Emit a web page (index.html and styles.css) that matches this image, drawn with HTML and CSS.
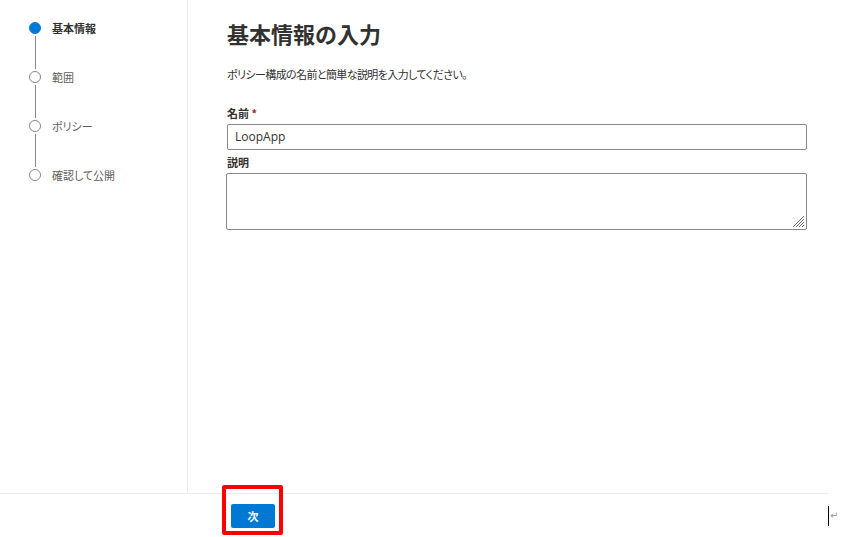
FILE: index.html
```html
<!DOCTYPE html>
<html lang="ja">
<head>
<meta charset="utf-8">
<link rel="stylesheet" href="styles.css">
</head>
<body>
<div class="page">
  <div class="main">
    <nav class="steps">
      <div class="step active">
        <div class="marker"><span class="dot"></span><span class="line"></span></div>
        <span class="label">基本情報</span>
      </div>
      <div class="step">
        <div class="marker"><span class="dot"></span><span class="line"></span></div>
        <span class="label">範囲</span>
      </div>
      <div class="step">
        <div class="marker"><span class="dot"></span><span class="line"></span></div>
        <span class="label">ポリシー</span>
      </div>
      <div class="step last">
        <div class="marker"><span class="dot"></span></div>
        <span class="label">確認して公開</span>
      </div>
    </nav>
    <section class="content">
      <h1 class="title">基本情報の入力</h1>
      <p class="desc">ポリシー構成の名前と簡単な説明を入力してください。</p>
      <label class="field-label">名前 <span class="req">*</span></label>
      <div class="input">LoopApp</div>
      <label class="field-label second">説明</label>
      <div class="textarea">
        <svg class="grip" width="13" height="13" viewBox="0 0 13 13">
          <path d="M12 1 L1 12 M12 4 L4 12 M12 7 L7 12 M12 10 L10 12" stroke="#605e5c" stroke-width="0.9"/>
        </svg>
      </div>
    </section>
  </div>
  <footer class="footer">
    <button class="next">次</button>
    <span class="highlight"></span>
  </footer>
  <span class="caret"></span>
  <span class="ret">↵</span>
</div>
</body>
</html>
```
FILE: styles.css
```css
* { box-sizing: border-box; }
html, body { margin: 0; padding: 0; background: #fff; }
body {
  font-family: "Noto Sans CJK JP", "Noto Sans", sans-serif;
  font-feature-settings: "palt" 1;
  color: #323130;
  width: 850px;
  height: 537px;
  overflow: hidden;
}
.page {
  position: relative;
  width: 828px;
  height: 537px;
}
.main {
  display: flex;
  height: 494px;
  border-bottom: 1px solid #edebe9;
}
.steps {
  width: 188px;
  border-right: 1px solid #edebe9;
  padding: 22px 0 0 29px;
}
.step {
  display: flex;
  align-items: flex-start;
  gap: 11px;
}
.marker {
  display: flex;
  flex-direction: column;
  align-items: center;
  width: 12px;
}
.dot {
  width: 12px;
  height: 12px;
  border-radius: 50%;
  border: 1.5px solid #8a8886;
  background: #fff;
}
.active .dot {
  border-color: #0078d4;
  background: #0078d4;
}
.line {
  width: 1px;
  height: 33px;
  margin: 2px 0 2px;
  background: #8a8886;
}
.label {
  font-size: 11px;
  line-height: 12px;
  color: #605e5c;
}
.active .label {
  color: #323130;
  font-weight: 700;
}
.content {
  flex: 1;
  padding: 19px 21px 0 39px;
  display: flex;
  flex-direction: column;
}
.title {
  margin: 0;
  font-size: 22px;
  line-height: 28px;
  font-weight: 700;
  font-feature-settings: normal;
  color: #323130;
}
.desc {
  margin: 19px 0 0;
  font-size: 11px;
  line-height: 16px;
  letter-spacing: -0.6px;
  color: #323130;
}
.field-label {
  margin-top: 24px;
  font-size: 11px;
  line-height: 14px;
  font-weight: 700;
  color: #323130;
}
.field-label.second { margin-top: 5px; }
.req { color: #a4262c; }
.input {
  margin-top: 4px;
  height: 26px;
  border: 1px solid #8a8886;
  border-radius: 2px;
  padding: 0 7px;
  font-family: "Open Sans", "Noto Sans", sans-serif;
  font-size: 12px;
  line-height: 24px;
  color: #323130;
}
.textarea {
  position: relative;
  margin-top: 4px;
  margin-left: -1px;
  height: 57px;
  border: 1px solid #8a8886;
  border-radius: 2px;
}
.grip {
  position: absolute;
  right: 1px;
  bottom: 1px;
}
.footer {
  position: relative;
  height: 43px;
  padding: 8px 0 0 231px;
}
.next {
  width: 44px;
  height: 24px;
  border: none;
  border-radius: 2px;
  background: #0078d4;
  color: #fff;
  font-family: "Noto Sans CJK JP", sans-serif;
  font-size: 11px;
  font-weight: 700;
  padding: 0;
}
.highlight {
  position: absolute;
  left: 222px;
  top: -9px;
  width: 61px;
  height: 50px;
  border: 4px solid #ff0000;
  border-radius: 2px;
}
.caret {
  position: absolute;
  left: 828px;
  top: 506px;
  width: 1px;
  height: 20px;
  background: #000;
}
.ret {
  position: absolute;
  left: 830px;
  top: 510px;
  font-size: 10px;
  line-height: 12px;
  color: #999;
  font-family: "DejaVu Sans", sans-serif;
}
```
